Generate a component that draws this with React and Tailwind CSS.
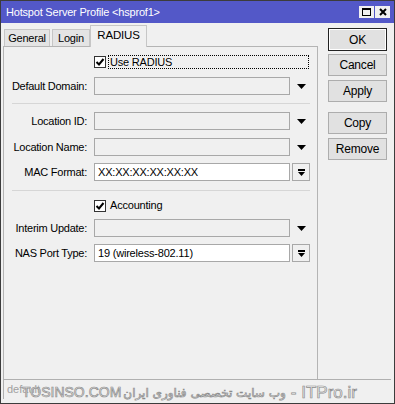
const Arrow = () => (
  <svg width="9" height="5" viewBox="0 0 9 5">
    <polygon points="0,0 9,0 4.5,5" fill="#000" />
  </svg>
)

const Check = () => (
  <svg width="10" height="10" viewBox="0 0 10 10">
    <path d="M1.5 5 L4 7.5 L8.5 2" fill="none" stroke="#000" strokeWidth="2" />
  </svg>
)

function Field({ label, white, value, trailing }) {
  return (
    <div className="flex items-center h-[18px]">
      <div className="w-[84px] text-right pr-[1px] tracking-[-0.25px]">{label}</div>
      <div
        className={
          'ml-[6px] w-[196px] h-[18px] border border-[#a8a8a8] px-[3px] flex items-center tracking-[-0.2px] ' +
          (white ? 'bg-white' : 'bg-[#f0f0f0]')
        }
      >
        {value}
      </div>
      {trailing === 'arrow' && (
        <div className="ml-[2px] w-[18px] h-[18px] flex items-center justify-center">
          <Arrow />
        </div>
      )}
      {trailing === 'button' && (
        <div className="ml-[2px] w-[18px] h-[18px] border border-[#a8a8a8] bg-[#f0f0f0] flex flex-col items-center justify-center">
          <div className="w-[7px] h-[2px] bg-black mb-[1px]" />
          <svg width="7" height="4" viewBox="0 0 7 4">
            <polygon points="0,0 7,0 3.5,4" fill="#000" />
          </svg>
        </div>
      )}
    </div>
  )
}

function Btn({ children, def, className = '' }) {
  return (
    <div
      className={
        'w-[59px] h-[22px] flex items-center justify-center bg-[#e1e1e1] text-[12px] tracking-[-0.2px] ' +
        (def ? 'border border-[#222] shadow-[inset_0_0_0_1px_#ffffff]' : 'border border-[#adadad]') +
        ' ' +
        className
      }
    >
      {children}
    </div>
  )
}

export default function App() {
  return (
    <div className="w-[395px] h-[404px] relative bg-[#f0f0f0] border border-[#3c3c3c] flex flex-col font-['Liberation_Sans',Arial,sans-serif] text-[11px] text-black overflow-hidden">
      {/* title bar */}
      <div className="h-[22px] shrink-0 bg-[#5358c8] flex items-center pl-[5px] pr-[4px]">
        <span className="text-white text-[11px] tracking-[-0.2px]">Hotspot Server Profile &lt;hsprof1&gt;</span>
        <div className="ml-auto flex gap-[1px]">
          <div className="w-[15px] h-[12px] bg-[#f0f0f0] flex items-center justify-center">
            <div className="w-[9px] h-[8px] border border-black border-t-2" />
          </div>
          <div className="w-[15px] h-[12px] bg-[#f0f0f0] flex items-center justify-center">
            <svg width="8" height="8" viewBox="0 0 8 8">
              <path d="M1 1 L7 7 M7 1 L1 7" stroke="#000" strokeWidth="2" />
            </svg>
          </div>
        </div>
      </div>

      <div className="flex flex-1 min-h-0">
        {/* tabs and panel */}
        <div className="w-[317px] pl-[2px] flex flex-col">
          <div className="h-[23px] flex items-end pl-[1px]">
            <div className="w-[46px] h-[17px] bg-[#e4e4e4] border border-b-0 border-[#c6c6c6] flex items-center justify-center tracking-[-0.2px]">
              General
            </div>
            <div className="ml-[2px] w-[38px] h-[17px] bg-[#e4e4e4] border border-b-0 border-[#c6c6c6] flex items-center justify-center tracking-[-0.2px]">
              Login
            </div>
            <div className="relative z-10 -mb-px w-[57px] h-[22px] bg-[#f0f0f0] border border-b-0 border-[#c6c6c6] flex items-center justify-center pb-[2px] text-[11.5px] tracking-[-0.2px]">
              RADIUS
            </div>
          </div>
          <div className="flex-1 border-t border-r border-l border-[#b4b4b4] pt-[8px] flex flex-col">
            <div className="flex items-center h-[14px]">
              <div className="w-[84px]" />
              <div className="ml-[6px] w-[12px] h-[12px] border border-[#333] bg-white flex items-center justify-center">
                <Check />
              </div>
              <div className="ml-[2px] w-[201px] h-[14px] border border-dotted border-black flex items-center pl-[1px] tracking-[-0.2px]">
                Use RADIUS
              </div>
            </div>
            <div className="mt-[8px]">
              <Field label="Default Domain:" trailing="arrow" />
            </div>
            <div className="mt-[8px] ml-[8px] w-[298px] border-t border-[#d6d6d6]" />
            <div className="mt-[8px]">
              <Field label="Location ID:" trailing="arrow" />
            </div>
            <div className="mt-[8px]">
              <Field label="Location Name:" trailing="arrow" />
            </div>
            <div className="mt-[7px]">
              <Field label="MAC Format:" white value="XX:XX:XX:XX:XX:XX" trailing="button" />
            </div>
            <div className="mt-[9px] ml-[8px] w-[298px] border-t border-[#d6d6d6]" />
            <div className="mt-[8px] flex items-center h-[13px]">
              <div className="w-[84px]" />
              <div className="ml-[6px] w-[12px] h-[12px] border border-[#333] bg-white flex items-center justify-center">
                <Check />
              </div>
              <div className="ml-[4px] tracking-[-0.2px]">Accounting</div>
            </div>
            <div className="mt-[7px]">
              <Field label="Interim Update:" trailing="arrow" />
            </div>
            <div className="mt-[7px]">
              <Field label="NAS Port Type:" white value="19 (wireless-802.11)" trailing="button" />
            </div>
          </div>
        </div>

        {/* buttons */}
        <div className="flex-1 pl-[10px] pt-[5px] flex flex-col">
          <Btn def className="h-[23px]">OK</Btn>
          <Btn className="mt-[3px]">Cancel</Btn>
          <Btn className="mt-[4px]">Apply</Btn>
          <Btn className="mt-[10px]">Copy</Btn>
          <Btn className="mt-[4px]">Remove</Btn>
        </div>
      </div>

      {/* status bar */}
      <div className="h-[24px] shrink-0 pl-[2px] pr-[3px]">
        <div className="h-[20px] border border-[#b0b0b0] border-r-0 border-b-0 flex items-center pl-[3px] text-[#a0a0a0]">
          default
        </div>
      </div>

      {/* watermark */}
      <div className="absolute left-[21px] top-[379px] flex items-center whitespace-nowrap text-[#f2f2f2] [-webkit-text-stroke:0.7px_#8c8c8c]">
        <span className="text-[14px] font-['Liberation_Sans',sans-serif]">TOSINSO.COM</span>
        <span className="ml-[2px] text-[12px] font-['DejaVu_Sans',sans-serif]">وب سایت تخصصی فناوری ایران</span>
        <span className="ml-[5px] text-[17px] font-['Liberation_Sans',sans-serif]">- ITPro.ir</span>
      </div>
    </div>
  )
}
